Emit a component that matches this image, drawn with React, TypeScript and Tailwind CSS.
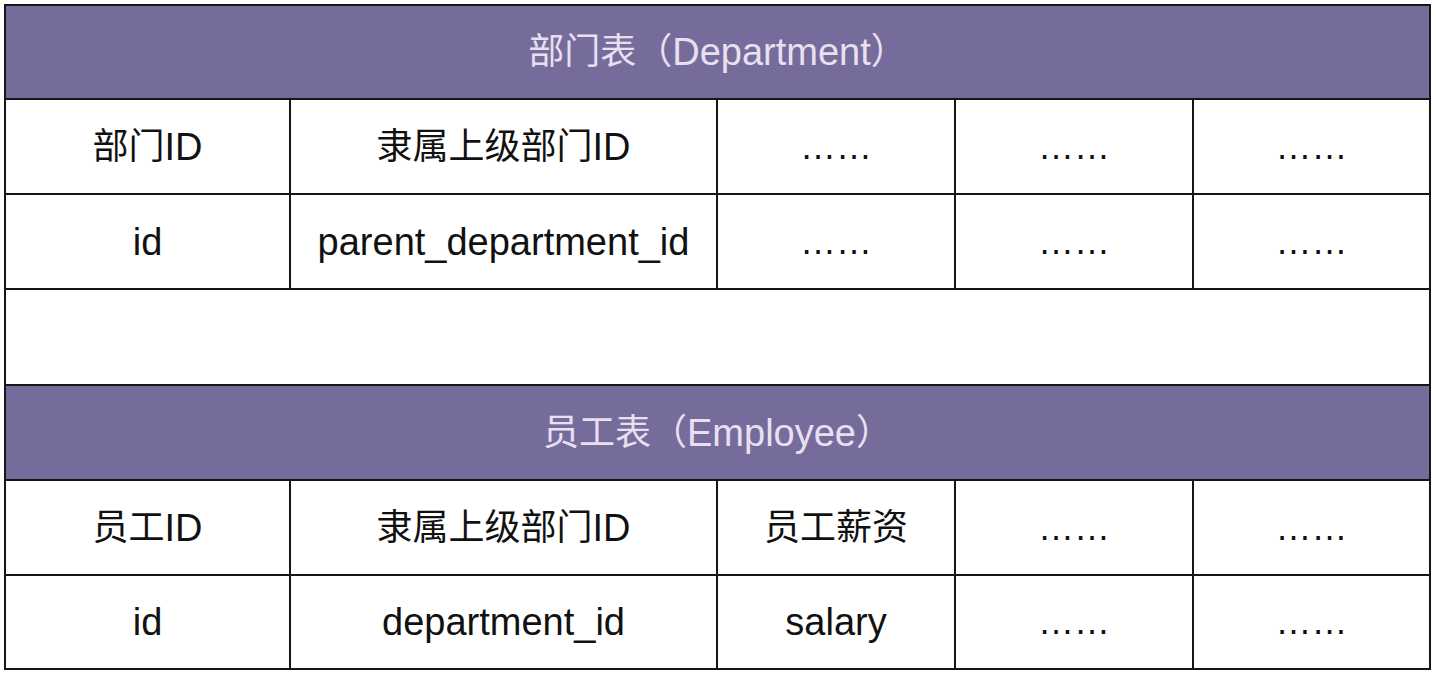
import React from "react";

const font = { fontFamily: '"Liberation Sans", "Noto Sans CJK SC", sans-serif' };

function Mixed({ text }: { text: string }) {
  const parts = text.match(/[\x20-\x7e]+|[^\x20-\x7e]+/g) || [];
  return (
    <>
      {parts.map((p, i) =>
        /^[\x20-\x7e]+$/.test(p) ? (
          <span key={i} className="text-[38px]">
            {p}
          </span>
        ) : (
          <span key={i} className="text-[36px]">
            {p}
          </span>
        )
      )}
    </>
  );
}

function Cell({ text }: { text?: string }) {
  return (
    <div className="bg-white flex items-center justify-center leading-none text-[#111111] whitespace-nowrap">
      {text ? <Mixed text={text} /> : null}
    </div>
  );
}

function Header({ text }: { text: string }) {
  return (
    <div className="col-span-5 bg-[#756c9c] flex items-center justify-center leading-none text-[#e8e0f0] whitespace-nowrap">
      <Mixed text={text} />
    </div>
  );
}

export default function App() {
  const dots = "……";
  return (
    <div className="w-[1436px] h-[674px] bg-white pt-[4px] pl-[4px]" style={font}>
      <div className="grid w-[1427px] bg-[#161616] p-[2px] gap-[2px] grid-cols-[283px_425px_236px_236px_235px] grid-rows-[92px_93px_93px_94px_93px_93px_92px]">
        <Header text="部门表（Department）" />
        <Cell text="部门ID" />
        <Cell text="隶属上级部门ID" />
        <Cell text={dots} />
        <Cell text={dots} />
        <Cell text={dots} />
        <Cell text="id" />
        <Cell text="parent_department_id" />
        <Cell text={dots} />
        <Cell text={dots} />
        <Cell text={dots} />
        <div className="col-span-5 bg-white" />
        <Header text="员工表（Employee）" />
        <Cell text="员工ID" />
        <Cell text="隶属上级部门ID" />
        <Cell text="员工薪资" />
        <Cell text={dots} />
        <Cell text={dots} />
        <Cell text="id" />
        <Cell text="department_id" />
        <Cell text="salary" />
        <Cell text={dots} />
        <Cell text={dots} />
      </div>
    </div>
  );
}
